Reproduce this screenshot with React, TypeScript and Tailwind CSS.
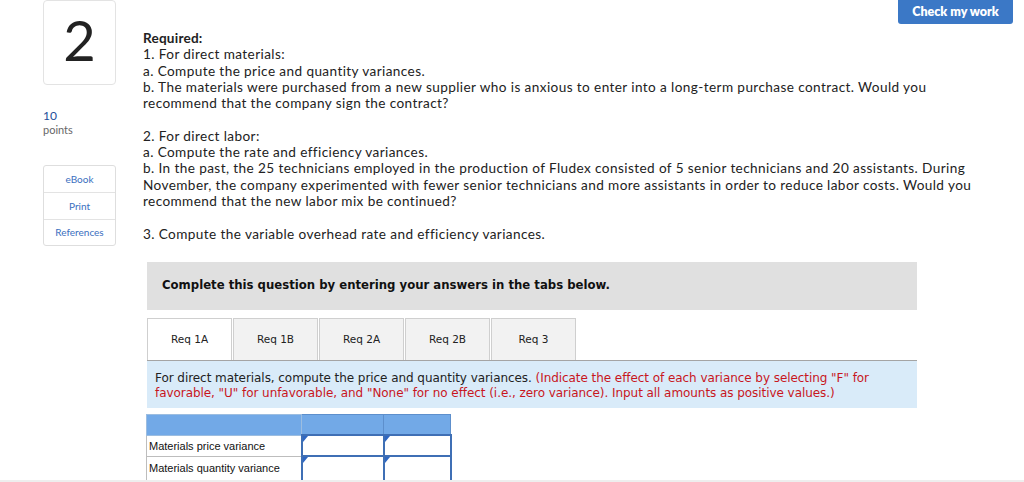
import React from "react";

const Tri = () => (
  <span className="absolute left-0 top-0 w-0 h-0 border-t-[6px] border-t-[#2f67c2] border-r-[5px] border-r-transparent" />
);

export default function App() {
  const tabs = ["Req 1A", "Req 1B", "Req 2A", "Req 2B", "Req 3"];
  return (
    <div className="w-[1024px] h-[482px] overflow-hidden bg-white flex flex-col">
      <div className="flex h-[480px] shrink-0 overflow-hidden">
        {/* left column */}
        <div className="ml-[43px] w-[73px] flex flex-col shrink-0">
          <div className="h-[85px] shrink-0 border border-[#e3e3e3] rounded-[4px] flex items-center justify-center">
            <span className="text-[56px] leading-none text-[#222] font-['Lato',sans-serif] font-normal mt-[-6px]">2</span>
          </div>
          <div className="mt-[24px] text-[12px] leading-[14px] text-[#1d4e9a] font-['Lato',sans-serif]">10</div>
          <div className="text-[11px] leading-[14px] text-[#666] font-['Lato',sans-serif]">points</div>
          <div className="mt-[28px] shrink-0 border border-[#dedede] rounded-[3px] flex flex-col text-[10px] text-[#3a6fc0] font-['Lato',sans-serif]">
            <div className="h-[27px] flex items-center justify-center border-b border-[#e3e3e3]">eBook</div>
            <div className="h-[27px] flex items-center justify-center border-b border-[#e3e3e3]">Print</div>
            <div className="h-[25px] flex items-center justify-center">References</div>
          </div>
        </div>

        {/* content */}
        <div className="ml-[27px] flex-1 min-w-0 flex flex-col">
          <div className="shrink-0 h-[24px] flex justify-end pr-[11px]">
            <div className="w-[115px] h-[24px] bg-[#3b78c6] rounded-b-[3px] flex items-center justify-center text-white text-[12.5px] font-extrabold font-['Lato',sans-serif]">
              Check my work
            </div>
          </div>
          <div className="shrink-0 mt-[6px] text-[13.6px] leading-[16.3px] tracking-[0.4px] text-[#222] font-['Lato',sans-serif] whitespace-nowrap">
            <div className="font-bold tracking-[0.2px]">Required:</div>
            <div>1. For direct materials:</div>
            <div>a. Compute the price and quantity variances.</div>
            <div>
              b. The materials were purchased from a new supplier who is anxious to enter into a long-term purchase contract. Would you
              <br />
              recommend that the company sign the contract?
            </div>
            <div className="h-[16.3px]" />
            <div>2. For direct labor:</div>
            <div>a. Compute the rate and efficiency variances.</div>
            <div>
              b. In the past, the 25 technicians employed in the production of Fludex consisted of 5 senior technicians and 20 assistants. During
              <br />
              November, the company experimented with fewer senior technicians and more assistants in order to reduce labor costs. Would you
              <br />
              recommend that the new labor mix be continued?
            </div>
            <div className="h-[16.3px]" />
            <div>3. Compute the variable overhead rate and efficiency variances.</div>
          </div>

          <div className="shrink-0 ml-[4px] w-[770px] mt-[20px] h-[48px] bg-[#e0e0e0] flex items-center pl-[15px]">
            <span className="text-[11.7px] font-bold text-[#111] font-['DejaVu_Sans',sans-serif]">
              Complete this question by entering your answers in the tabs below.
            </span>
          </div>

          <div className="shrink-0 ml-[4px] w-[770px] mt-[8px] flex gap-[1px]">
            {tabs.map((t, i) => (
              <div
                key={t}
                className={
                  i === 0
                    ? "w-[85px] h-[42px] pt-[2px] flex items-center justify-center bg-white border border-b-0 border-[#cfcfcf] text-[10.5px] text-[#222] font-['DejaVu_Sans',sans-serif]"
                    : "w-[85px] h-[42px] pt-[2px] flex items-center justify-center bg-[#f2f2f2] border border-b-0 border-[#cfcfcf] text-[10.5px] text-[#222] font-['DejaVu_Sans',sans-serif]"
                }
              >
                {t}
              </div>
            ))}
          </div>
          <div className="shrink-0 ml-[4px] w-[770px] h-[48px] bg-[#d9ebf9] border-t border-[#a4a4a4] pl-[8px] pt-[10px] text-[12px] leading-[15px] font-['DejaVu_Sans',sans-serif] tracking-[-0.06px]">
            <span className="text-[#222]">For direct materials, compute the price and quantity variances. </span>
            <span className="text-[#c8161d]">
              (Indicate the effect of each variance by selecting "F" for favorable, "U" for unfavorable, and "None" for no effect (i.e., zero variance). Input all amounts as positive values.)
            </span>
          </div>

          <table className="shrink-0 self-start ml-[3px] mt-[6px] border-collapse table-fixed w-[304px] text-[11px] font-['Liberation_Sans',sans-serif] text-[#111]">
            <colgroup>
              <col className="w-[155px]" />
              <col className="w-[82px]" />
              <col className="w-[67px]" />
            </colgroup>
            <tbody>
              <tr className="h-[21px] bg-[#72a9e7]">
                <td className="border border-[#9cbde0] p-0"></td>
                <td className="border border-[#5d8fcc] p-0"></td>
                <td className="border border-[#5d8fcc] p-0"></td>
              </tr>
              <tr className="h-[21px]">
                <td className="border border-[#bdbdbd] pl-[2px] py-0 whitespace-nowrap">Materials price variance</td>
                <td className="relative border-2 border-[#3f6fb5] p-0"><Tri /></td>
                <td className="relative border-2 border-[#3f6fb5] p-0"><Tri /></td>
              </tr>
              <tr className="h-[28px]">
                <td className="border border-[#bdbdbd] pl-[2px] pt-[3px] pb-[7px] whitespace-nowrap align-top">Materials quantity variance</td>
                <td className="relative border-2 border-[#3f6fb5] p-0"><Tri /></td>
                <td className="relative border-2 border-[#3f6fb5] p-0"><Tri /></td>
              </tr>
            </tbody>
          </table>
        </div>
      </div>
      <div className="h-[2px] bg-[#eeeeee]" />
    </div>
  );
}
